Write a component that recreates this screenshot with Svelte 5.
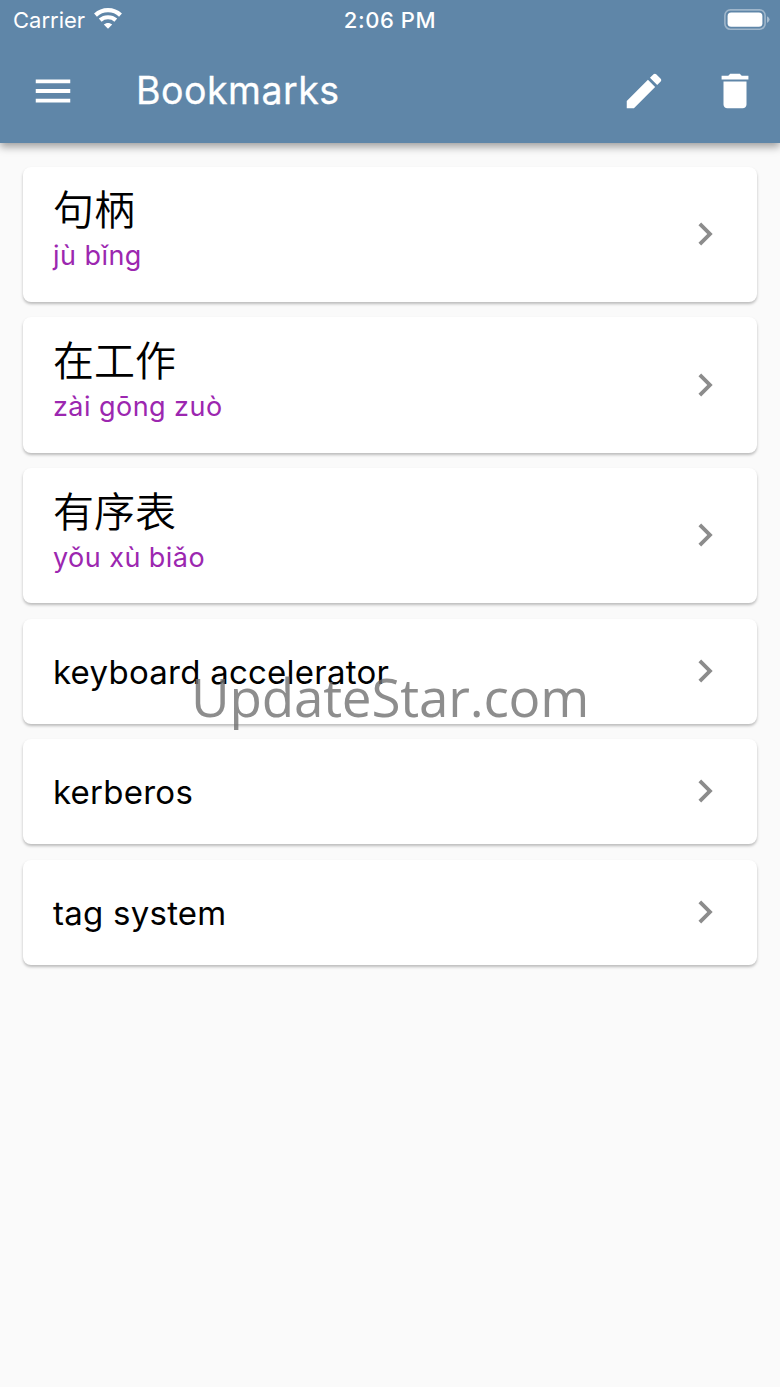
<script>
  const bookmarks = [
    { word: '句柄', pinyin: 'jù bǐng' },
    { word: '在工作', pinyin: 'zài gōng zuò' },
    { word: '有序表', pinyin: 'yǒu xù biǎo' },
    { word: 'keyboard accelerator' },
    { word: 'kerberos' },
    { word: 'tag system' },
  ];
</script>

<div class="screen">
  <header>
    <div class="status">
      <div class="carrier">
        <span>Carrier</span>
        <svg width="28" height="21" viewBox="0 0 28 21" fill="none" stroke="#fff" stroke-width="4.2">
          <path d="M1.5 7.1 C8.5 0.5 19.5 0.5 26.5 7.1" />
          <path d="M6.2 12.1 C10.5 8.3 17.5 8.3 21.8 12.1" />
          <path d="M14 20.8 L9.8 16.6 C12 14.4 16 14.4 18.2 16.6 Z" fill="#fff" stroke="none" />
        </svg>
      </div>
      <span class="time">2:06 PM</span>
      <svg class="battery" width="46" height="22" viewBox="0 0 46 22">
        <rect x="0.9" y="0.9" width="40.2" height="19.4" rx="5.5" fill="none" stroke="#fff" stroke-opacity=".4" stroke-width="1.6" />
        <rect x="3.6" y="3.4" width="34.8" height="14.4" rx="3.5" fill="#fff" />
        <path d="M43 7.2 Q45.6 8.6 45.6 10.6 Q45.6 12.6 43 14 Z" fill="#fff" fill-opacity=".45" />
      </svg>
    </div>
    <div class="toolbar">
      <svg viewBox="0 0 24 24"><path d="M3 18h18v-2H3v2zm0-5h18v-2H3v2zm0-7v2h18V6H3z" /></svg>
      <h1>Bookmarks</h1>
      <svg viewBox="0 0 24 24"><path d="M3 17.25V21h3.75L17.81 9.94l-3.75-3.75L3 17.25zM20.71 7.04c.39-.39.39-1.02 0-1.41l-2.34-2.34c-.39-.39-1.02-.39-1.41 0l-1.83 1.83 3.75 3.75 1.83-1.83z" /></svg>
      <svg class="trash" viewBox="0 0 24 24"><path d="M6 19c0 1.1.9 2 2 2h8c1.1 0 2-.9 2-2V7H6v12zM19 4h-3.5l-1-1h-5l-1 1H5v2h14V4z" /></svg>
    </div>
  </header>

  <main>
    {#each bookmarks as item}
      <div class="card" class:tall={item.pinyin}>
        <div class="text">
          <div class="word">{item.word}</div>
          {#if item.pinyin}
            <div class="pinyin">{item.pinyin}</div>
          {/if}
        </div>
        <svg viewBox="0 0 24 24"><path d="M10 6L8.59 7.41 13.17 12l-4.58 4.59L10 18l6-6z" /></svg>
      </div>
    {/each}
  </main>

  <div class="watermark">UpdateStar.com</div>
</div>

<style>
  :global(body) {
    margin: 0;
    background: #fafafa;
  }

  .screen {
    position: relative;
    height: 1387px;
    overflow: hidden;
    background: #fafafa;
    font-family: Inter, 'Noto Sans CJK SC', sans-serif;
  }

  header {
    height: 143.4px;
    background: #5f86a8;
    color: #fff;
    box-shadow: 0 4px 8px rgba(0, 0, 0, 0.36);
  }

  .status {
    display: grid;
    grid-template-columns: 1fr auto 1fr;
    align-items: center;
    height: 39px;
    padding: 0 10px 0 13px;
    font-size: 22px;
  }

  .carrier {
    display: flex;
    align-items: center;
    gap: 9px;
  }

  .carrier svg {
    margin-bottom: 2px;
  }

  .time {
    margin-right: 3px;
    font-weight: 500;
    letter-spacing: 0.6px;
  }

  .battery {
    justify-self: end;
  }

  .toolbar {
    display: flex;
    align-items: center;
    height: 104px;
    padding: 0 22px 0 30px;
  }

  .toolbar svg {
    width: 46px;
    height: 46px;
    fill: #fff;
  }

  h1 {
    flex: 1;
    margin: 0 0 1px 60px;
    font-size: 37.5px;
    font-weight: 400;
    letter-spacing: 0.5px;
    -webkit-text-stroke: 0.3px #fff;
  }

  .trash {
    margin-left: 45px;
  }

  main {
    display: flex;
    flex-direction: column;
    gap: 15.2px;
    padding: 23.4px 23px;
  }

  .card {
    display: flex;
    align-items: center;
    justify-content: space-between;
    box-sizing: border-box;
    height: 105.4px;
    padding: 0 29.5px 0 30px;
    border-radius: 8px;
    background: #fff;
    box-shadow: 0 2px 3px rgba(0, 0, 0, 0.25);
  }

  .tall {
    height: 135.4px;
  }

  .card svg {
    width: 46px;
    height: 46px;
    margin-bottom: 1px;
    fill: #8c8c8c;
  }

  .text {
    padding-top: 1px;
  }

  .tall .text {
    padding: 0 0 9px;
  }

  .word {
    font-size: 33px;
    letter-spacing: 0.25px;
    line-height: 50px;
    color: #000;
  }

  .tall .word {
    font-size: 41px;
    font-weight: 350;
    letter-spacing: 0;
  }

  .pinyin {
    padding-top: 3px;
    font-size: 27px;
    letter-spacing: 0.45px;
    line-height: 36px;
    color: #9c27b0;
  }

  .watermark {
    position: absolute;
    top: 664px;
    left: 191px;
    font-family: 'Open Sans', sans-serif;
    font-size: 53px;
    letter-spacing: -0.2px;
    line-height: 66px;
    color: rgba(112, 112, 112, 0.8);
  }
</style>
